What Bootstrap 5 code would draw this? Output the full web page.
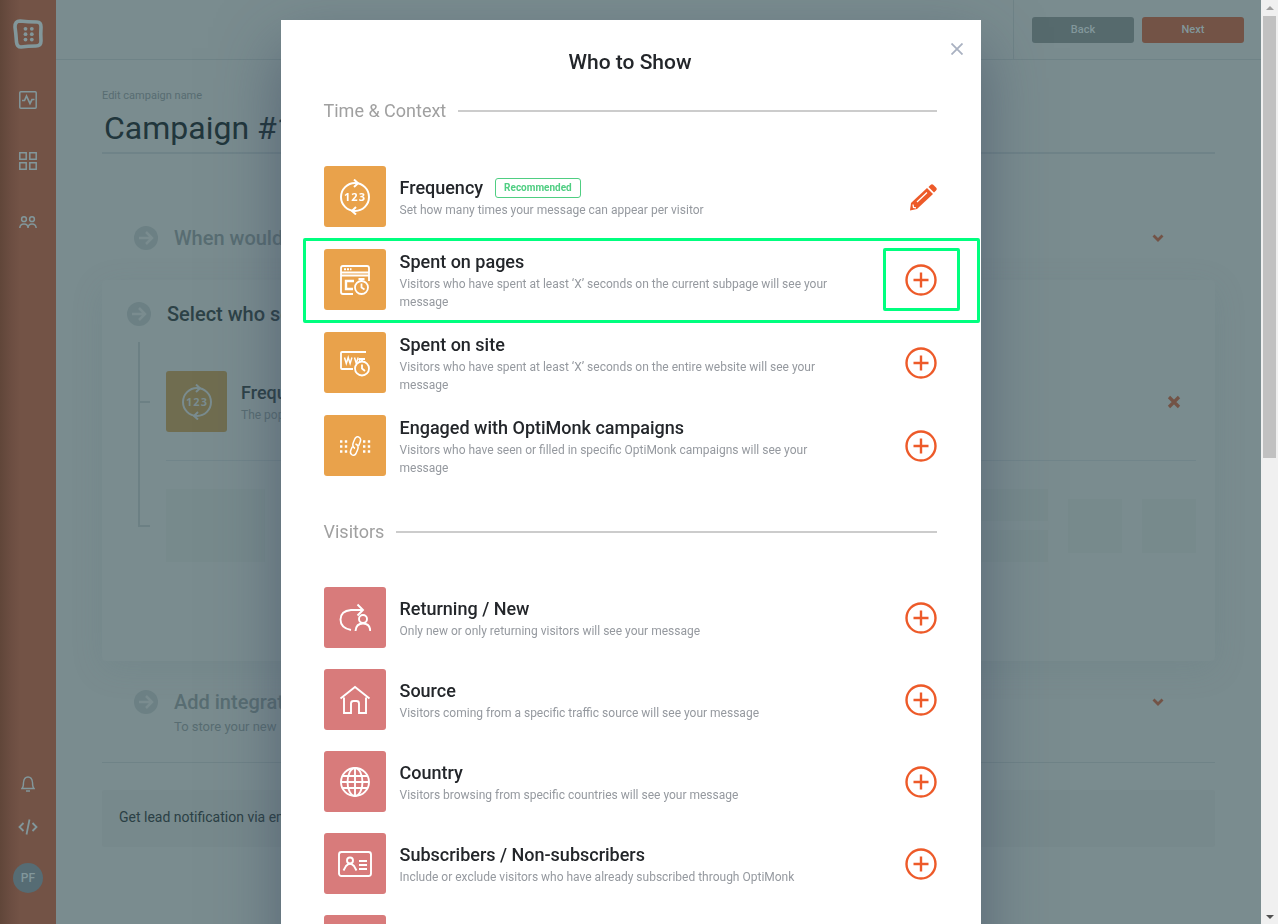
<!DOCTYPE html>
<html lang="en">
<head>
<meta charset="utf-8">
<meta name="viewport" content="width=device-width, initial-scale=1">
<title>Campaign settings</title>
<link href="https://cdn.jsdelivr.net/npm/bootstrap@5.3.0/dist/css/bootstrap.min.css" rel="stylesheet">
<style>
  :root { --page: #7a8c8f; --brand: #ed5a29; --rust: #735346; --muted: #586d72; --dark: #2d4247; --faint: #6c8084; }
  body { font-family: Roboto, "Liberation Sans", sans-serif; font-size: 12px; line-height: 18px; background: var(--page); color: #23262a; }
  svg { fill: none; stroke: currentColor; display: block; flex: none; }
  a { color: inherit; text-decoration: none; }

  /* left rail */
  .rail { width: 56px; padding: 19px 0 31px; background: linear-gradient(90deg, #604639 0, #6b4d41 10px, var(--rust) 20px); color: #82979b; }
  .rail-logo { margin-bottom: 20px; }
  .rail-link { height: 61px; }
  .rail-tool { height: 43px; }
  .avatar { width: 30px; height: 30px; margin-top: 15px; background: #566c74; color: #82979b; font-weight: 500; }

  /* page behind the dialog */
  .topbar { height: 60px; border-bottom: 1px solid #6f8387; }
  .topbar-actions { border-left: 1px solid #6f8387; padding: 0 17px 0 18px; gap: 8px; }
  .top-btn { width: 102px; height: 26px; padding: 0; border: 0; border-radius: 3px; font-size: 11px; font-weight: 500; color: #82979b; background: #566a6d; }
  .top-btn.next { background: var(--rust); }
  .workspace { padding: 27px 46px 0; color: var(--muted); }
  .name-label { font-size: 11px; }
  .name-input { height: 49px; padding: 0 0 2px 2px; font-size: 32px; font-weight: 400; color: #21363c; background: none; border: 0; border-bottom: 2px solid #6f8388; border-radius: 0; }
  .step { padding: 0 51px 0 32px; gap: 16px; }
  .step-when { margin-top: 72px; }
  .step-title { font-size: 20px; line-height: 24px; font-weight: 500; }
  .step-icon { color: var(--faint); }
  .active-step { margin-top: 30px; padding: 22px 19px 0 25px; height: 381px; border-radius: 4px; box-shadow: 0 8px 32px rgba(90, 112, 120, .16); }
  .tree { width: 12px; margin: 6px 0 0 11px; color: var(--faint); }
  .tree span { border: solid currentColor; border-width: 0 0 2px 2px; width: 12px; }
  .tree span:first-child { height: 61px; }
  .tree span:last-child { height: 124px; }
  .branch { margin: 45px 0 0 16px; }
  .branch-row { padding: 0 15px 28px 0; gap: 14px; border-bottom: 1px solid #71858a; }
  .branch-row .tile { background: #706d50; color: #7a8c8f; }
  .ghosts { margin-top: 28px; gap: 20px; }
  .ghost { background: #778a8c; }
  .ghost-lines { gap: 9px; }
  .ghost-lines .ghost { height: 32px; }
  .ghost-tile { width: 99px; height: 73px; }
  .ghost-sq { width: 54px; height: 54px; }
  .step-add { margin-top: 29px; padding-bottom: 22px; border-bottom: 1px solid #6f8387; }
  .step-note { font-size: 13px; line-height: 26px; }
  .notify { margin-top: 27px; padding: 17px; height: 57px; font-size: 14px; line-height: 20px; background: #77898c; color: #2b4045; border-radius: 3px; }

  /* scroll track */
  .track { width: 17px; background: #f0f0f0; padding: 0 2px 3px; color: #505050; }
  .track i { border: 4px solid transparent; }
  .track .up { border-bottom-color: #a0a0a0; margin-top: 2px; }
  .track .down { border-top-color: #505050; border-bottom: 0; margin-bottom: 2px; }
  .track .thumb { background: #c1c1c1; width: 13px; height: 48%; margin-top: 6px; }

  /* dialog */
  .overlay { inset: 0 17px 0 0; padding-top: 20px; }
  .picker { width: 700px; min-height: 100vh; padding: 26px 44px 0 43px; background: #fff; box-shadow: 0 28px 60px rgba(50, 62, 90, .5); }
  .picker-title { font-size: 21px; line-height: 32px; font-weight: 500; margin: 0 0 19px; }
  .picker-close { top: 18px; right: 13px; width: 22px; height: 22px; padding: 0; border: 0; background: none; color: #a9b1c1; }
  .group-title { font-size: 18px; line-height: 28px; color: #a0a0a0; gap: 12px; margin: 0 0 41px; font-weight: 400; }
  .group-title::after { content: ""; flex: 1; height: 2px; background: #ccc; }
  .rules { gap: 21px; margin-bottom: 41px; }
  .rule { min-height: 61px; gap: 14px; }
  .tile { width: 61px; height: 61px; border-radius: 3px; background: #d87b7b; color: #fff; flex: none; }
  .picker .tile { width: 62px; align-self: flex-start; }
  .timing .tile { background: #e9a24b; }
  .timing .rule { min-height: 62px; }
  .rule-name { font-size: 18px; line-height: 26px; font-weight: 500; margin: 0; gap: 12px; }
  .rule-text { color: #95999f; padding-right: 45px; }
  .tag { font-size: 10px; line-height: 18px; font-weight: 700; padding: 0 8px; border: 1px solid #4fce82; border-radius: 3px; color: #4fce82; }
  .act { width: 32px; height: 32px; padding: 0; border: 0; background: none; color: var(--brand); flex: none; }
  .mark-row { inset: -11px -43px -12px -21px; border: 3px solid #00ff7f; border-radius: 2px; pointer-events: none; }
  .mark-act { inset: -16px -23px -15px -22px; border: 3px solid #00ff7f; border-radius: 2px; pointer-events: none; }
  .digits { font: 700 11px "Open Sans", sans-serif; fill: currentColor; stroke: none; text-anchor: middle; letter-spacing: 1px; }
</style>
</head>
<body class="vh-100 overflow-hidden">
<svg width="0" height="0" class="position-absolute" aria-hidden="true">
  <symbol id="i-freq" viewBox="0 0 36 36"><g stroke-width="2"><circle cx="18" cy="18" r="14"/><path d="M17 .500L21 4.200L17 8M19 28L15 32L19 35.500"/></g></symbol>
  <symbol id="i-plus" viewBox="0 0 32 32"><circle cx="16" cy="16" r="14.500" stroke-width="2.400"/><path d="M16 8.500v15M8.500 16h15" stroke-width="2.400"/></symbol>
  <symbol id="i-arrow" viewBox="0 0 24 24"><circle cx="12" cy="12" r="12" fill="currentColor" stroke="none"/><path d="M5 12h13M12 6l6 6l-6 6" stroke="#7a8c8f" stroke-width="2.500"/></symbol>
  <symbol id="i-chev" viewBox="0 0 12 8"><path d="M1.500 1.500L6 6l4.500-4.500" stroke-width="2.800"/></symbol>
</svg>

<div class="d-flex h-100">
  <nav class="rail d-flex flex-column align-items-center flex-shrink-0" aria-label="Main">
    <a href="#" class="rail-logo" aria-label="Home"><svg width="30" height="30" viewBox="0 0 30 30"><path d="M7 2Q15 3 24 3Q28 3 28 8Q27.500 15 28 22Q28 27 23 27Q15 27 8 28Q4 28 3.500 23Q3 15 2 8Q2 2 7 2Z" stroke-width="3.600"/><g fill="currentColor" stroke="none"><circle cx="12.500" cy="9.800" r="1.900"/><circle cx="18.800" cy="9.800" r="1.900"/><circle cx="12.500" cy="15.200" r="1.900"/><circle cx="18.800" cy="15.200" r="1.900"/><circle cx="12.500" cy="20.600" r="1.900"/><circle cx="18.800" cy="20.600" r="1.900"/></g></svg></a>
    <a href="#" class="rail-link d-flex align-items-center" aria-label="Activity"><svg width="18" height="18" viewBox="0 0 18 18"><rect x=".800" y=".800" width="16.400" height="16.400" rx="1" stroke-width="1.500"/><path d="M3 9.500h2.500L7.500 5l3.500 7.500l2-4h2.500" stroke-width="1.700"/></svg></a>
    <a href="#" class="rail-link d-flex align-items-center" aria-label="Dashboard"><svg width="18" height="18" viewBox="0 0 18 18" stroke-width="1.500"><path d="M.8.800h6.400v6.400H.8zM10.800.800h6.400v6.400h-6.400zM.8 10.800h6.400v6.400H.8zM10.800 10.800h6.400v6.400h-6.400z"/></svg></a>
    <a href="#" class="rail-link d-flex align-items-center" aria-label="Leads"><svg width="18" height="12" viewBox="0 0 18 12" stroke-width="1.500"><circle cx="5" cy="3.200" r="2.400"/><circle cx="13" cy="3.200" r="2.400"/><path d="M.8 12Q1 8 5 8T9 12Q9.200 8 13 8T17.200 12"/></svg></a>
    <a href="#" class="rail-tool mt-auto d-flex align-items-center" aria-label="Notifications"><svg width="14" height="16" viewBox="0 0 14 16" stroke-width="1.400"><path d="M1 12.500Q2.500 11 2.500 6.500Q3 1 7 1t4.500 5.500Q11.500 11 13 12.500zM5 15h4"/></svg></a>
    <a href="#" class="rail-tool d-flex align-items-center" aria-label="Insert code"><svg width="20" height="16" viewBox="0 0 20 16" stroke-width="1.800"><path d="M5.500 4L1.500 8l4 4M14.500 4l4 4l-4 4M11.500.500l-3 15"/></svg></a>
    <a href="#" class="avatar rounded-circle d-flex align-items-center justify-content-center">PF</a>
  </nav>

  <div class="flex-grow-1">
    <header class="topbar d-flex justify-content-end">
      <div class="topbar-actions d-flex align-items-center">
        <button type="button" class="top-btn">Back</button>
        <button type="button" class="top-btn next">Next</button>
      </div>
    </header>
    <main class="workspace">
      <label for="campaign" class="name-label d-block">Edit campaign name</label>
      <input id="campaign" class="name-input w-100 d-block" type="text" value="Campaign #1">

      <div class="step step-when d-flex align-items-center">
        <svg class="step-icon" width="24" height="24"><use href="#i-arrow"/></svg>
        <div class="step-title">When would</div>
        <svg class="ms-auto" width="12" height="8" style="color:var(--rust)"><use href="#i-chev"/></svg>
      </div>

      <section class="active-step">
        <div class="d-flex align-items-center gap-3">
          <svg class="step-icon" width="24" height="24"><use href="#i-arrow"/></svg>
          <div class="step-title" style="color:var(--dark)">Select who sees</div>
        </div>
        <div class="d-flex align-items-start">
          <div class="tree mt-3 d-flex flex-column"><span></span><span></span></div>
          <div class="branch flex-grow-1">
            <div class="branch-row d-flex align-items-center">
              <div class="tile d-flex align-items-center justify-content-center"><svg width="36" height="36"><use href="#i-freq"/><text class="digits" x="18" y="22">123</text></svg></div>
              <div><h3 class="rule-name" style="color:var(--dark)">Frequency</h3><div>The popup</div></div>
              <svg class="ms-auto" width="14" height="14" viewBox="0 0 14 14" style="color:var(--rust)"><path d="M2 2l10 10M12 2L2 12" stroke-width="3.200"/></svg>
            </div>
            <div class="ghosts d-flex align-items-center">
              <div class="ghost ghost-tile"></div>
              <div class="ghost-lines flex-grow-1 d-flex flex-column"><div class="ghost"></div><div class="ghost"></div></div>
              <div class="ghost ghost-sq"></div>
              <div class="ghost ghost-sq"></div>
            </div>
          </div>
        </div>
      </section>

      <div class="step step-add d-flex align-items-start">
        <svg class="step-icon" width="24" height="24"><use href="#i-arrow"/></svg>
        <div><div class="step-title">Add integration</div><div class="step-note">To store your new</div></div>
        <svg class="ms-auto mt-2" width="12" height="8" style="color:var(--rust)"><use href="#i-chev"/></svg>
      </div>
      <div class="notify">Get lead notification via email</div>
    </main>
  </div>

  <div class="track d-flex flex-column align-items-center flex-shrink-0" aria-hidden="true"><i class="up"></i><div class="thumb"></div><i class="down mt-auto"></i></div>
</div>

<div class="overlay position-fixed overflow-hidden">
  <div class="picker position-relative mx-auto" role="dialog" aria-labelledby="picker-title">
    <button type="button" class="picker-close position-absolute d-flex align-items-center justify-content-center" aria-label="Close"><svg width="12" height="12" viewBox="0 0 12 12" stroke-width="1.800"><path d="M.5.500l11 11M11.500.500l-11 11"/></svg></button>
    <h1 id="picker-title" class="picker-title text-center">Who to Show</h1>

    <h2 class="group-title d-flex align-items-center">Time &amp; Context</h2>
    <div class="rules timing d-flex flex-column">
      <div class="rule d-flex align-items-center">
        <div class="tile d-flex align-items-center justify-content-center"><svg width="36" height="36"><use href="#i-freq"/><text class="digits" x="18" y="22">123</text></svg></div>
        <div class="flex-grow-1"><h3 class="rule-name d-flex align-items-center">Frequency <span class="tag">Recommended</span></h3><div class="rule-text">Set how many times your message can appear per visitor</div></div>
        <button type="button" class="act d-flex align-items-center justify-content-end" aria-label="Edit frequency"><svg width="27" height="27" viewBox="0 0 27 27"><path d="M1 19L17 4l6 6L7 25L0 26.500z" fill="currentColor" stroke="none"/><path d="M18.500 3L20.500 1Q22-.300 23.500 1L26 3.500Q27.500 5 26 6.500L24 8.500z" fill="currentColor" stroke="none"/><path d="M7 18L17 8.500M3 20.500l.5 3l2.500.300" stroke="#fff" stroke-width="1.300"/></svg></button>
      </div>
      <div class="rule d-flex align-items-center position-relative">
        <div class="tile d-flex align-items-center justify-content-center"><svg width="32" height="32" viewBox="0 0 32 32" stroke-width="1.800"><path d="M30 17V4Q30 2 28 2H4Q2 2 2 4V28Q2 30 4 30H14M2 8.500H30M2 11.500H30"/><path d="M5 5.300h7.500" stroke-dasharray="2 1" stroke-width="2"/><path d="M15 17H7v8h7" stroke-width="2.400"/><circle cx="22.500" cy="23.500" r="6.500"/><path d="M22.500 17v-2M19.500 15h6M22.500 19.500v4l3 2"/></svg></div>
        <div class="flex-grow-1"><h3 class="rule-name">Spent on pages</h3><div class="rule-text">Visitors who have spent at least ‘X’ seconds on the current subpage will see your message</div></div>
        <span class="mark-row position-absolute"></span>
        <button type="button" class="act position-relative" aria-label="Add spent on pages"><svg width="32" height="32"><use href="#i-plus"/></svg><span class="mark-act position-absolute"></span></button>
      </div>
      <div class="rule d-flex align-items-center">
        <div class="tile d-flex align-items-center justify-content-center"><svg width="32" height="32" viewBox="0 0 32 32" stroke-width="1.800"><path d="M27 5H3Q2 5 2 6V21Q2 22 3 22H14"/><path d="M5.500 10.500l1.800 6l1.900-6l1.900 6l1.800-6M15.500 10.500l1.800 6l1.900-6M20 12l1 2" stroke-width="1.500"/><circle cx="23" cy="21.500" r="7"/><path d="M23 14v-2M20 12h6M23 17.500v4l3 2.500"/></svg></div>
        <div class="flex-grow-1"><h3 class="rule-name">Spent on site</h3><div class="rule-text">Visitors who have spent at least ‘X’ seconds on the entire website will see your message</div></div>
        <button type="button" class="act" aria-label="Add spent on site"><svg width="32" height="32"><use href="#i-plus"/></svg></button>
      </div>
      <div class="rule d-flex align-items-center">
        <div class="tile d-flex align-items-center justify-content-center"><svg width="32" height="32" viewBox="0 0 32 32"><g stroke-width="2.400" stroke-dasharray="2.400 2.400"><path d="M1 11.500h7.200M1 16.500h7.200M1 21.500h7.200M24 11.500h7.200M24 16.500h7.200M24 21.500h7.200"/></g><g stroke-width="1.500"><path d="M16 18.500Q12.500 16.500 14.500 12L16 8.500Q18 5.500 20.500 7.500Q22.500 9 21 12.500L19.500 16"/><path d="M16.500 14Q20.500 15.500 18.500 20L17 23.500Q15 26.500 12.500 24.500Q10.500 23 12 19.500L13.500 16.500"/></g></svg></div>
        <div class="flex-grow-1"><h3 class="rule-name">Engaged with OptiMonk campaigns</h3><div class="rule-text">Visitors who have seen or filled in specific OptiMonk campaigns will see your message</div></div>
        <button type="button" class="act" aria-label="Add engaged with campaigns"><svg width="32" height="32"><use href="#i-plus"/></svg></button>
      </div>
    </div>

    <h2 class="group-title d-flex align-items-center">Visitors</h2>
    <div class="rules d-flex flex-column">
      <div class="rule d-flex align-items-center">
        <div class="tile d-flex align-items-center justify-content-center"><svg width="32" height="32" viewBox="0 0 32 32" stroke-width="1.900"><path d="M12 28Q1.500 26 1.500 17.500T12 8H24M18.500 2.500L24 8l-5.500 5.500"/><circle cx="24" cy="17" r="4"/><path d="M16.500 29Q17 21.500 24 21.500T31.300 29"/></svg></div>
        <div class="flex-grow-1"><h3 class="rule-name">Returning / New</h3><div class="rule-text">Only new or only returning visitors will see your message</div></div>
        <button type="button" class="act" aria-label="Add returning or new"><svg width="32" height="32"><use href="#i-plus"/></svg></button>
      </div>
      <div class="rule d-flex align-items-center">
        <div class="tile d-flex align-items-center justify-content-center"><svg width="32" height="32" viewBox="0 0 32 32" stroke-width="1.900"><path d="M1.500 14.500L16 3l14.500 11.500M5 13.500V29h7V19.500Q12 17 14.500 17h3Q20 17 20 19.500V29h7V13.500"/></svg></div>
        <div class="flex-grow-1"><h3 class="rule-name">Source</h3><div class="rule-text">Visitors coming from a specific traffic source will see your message</div></div>
        <button type="button" class="act" aria-label="Add source"><svg width="32" height="32"><use href="#i-plus"/></svg></button>
      </div>
      <div class="rule d-flex align-items-center">
        <div class="tile d-flex align-items-center justify-content-center"><svg width="32" height="32" viewBox="0 0 32 32" stroke-width="1.900"><circle cx="16" cy="16" r="14"/><ellipse cx="16" cy="16" rx="7.500" ry="14"/><path d="M16 2v28M2 16h28M4 10h24M4 22h24"/></svg></div>
        <div class="flex-grow-1"><h3 class="rule-name">Country</h3><div class="rule-text">Visitors browsing from specific countries will see your message</div></div>
        <button type="button" class="act" aria-label="Add country"><svg width="32" height="32"><use href="#i-plus"/></svg></button>
      </div>
      <div class="rule d-flex align-items-center">
        <div class="tile d-flex align-items-center justify-content-center"><svg width="34" height="28" viewBox="0 0 34 28" stroke-width="1.900"><rect x="1" y="2" width="32" height="24" rx="2.500"/><circle cx="12" cy="10.500" r="3"/><path d="M5.500 20.500L8 16Q12 11.500 16 16l2.500 4.500M21 11h8M21 15h8M21 19h8"/></svg></div>
        <div class="flex-grow-1"><h3 class="rule-name">Subscribers / Non-subscribers</h3><div class="rule-text">Include or exclude visitors who have already subscribed through OptiMonk</div></div>
        <button type="button" class="act" aria-label="Add subscribers"><svg width="32" height="32"><use href="#i-plus"/></svg></button>
      </div>
      <div class="rule d-flex align-items-center"><div class="tile"></div></div>
    </div>
  </div>
</div>
<script src="https://cdn.jsdelivr.net/npm/bootstrap@5.3.0/dist/js/bootstrap.bundle.min.js"></script>
</body>
</html>
